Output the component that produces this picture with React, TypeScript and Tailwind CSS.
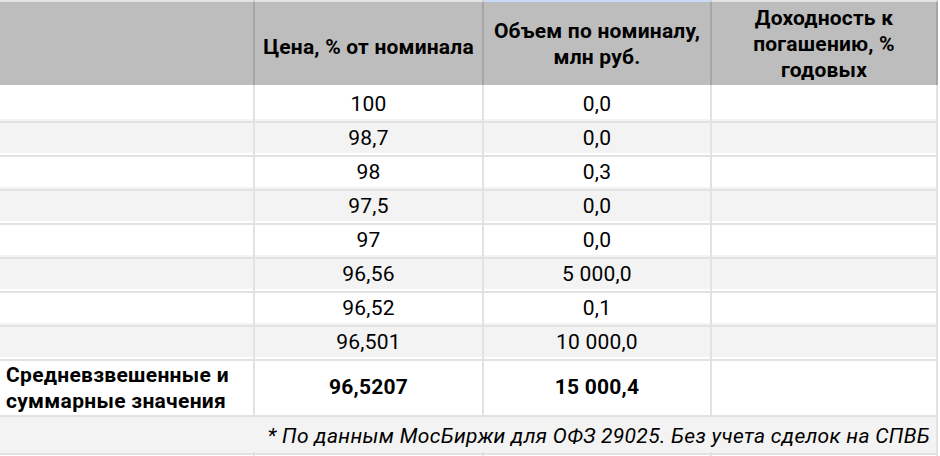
import React from "react";

const rows = [
  ["100", "0,0"],
  ["98,7", "0,0"],
  ["98", "0,3"],
  ["97,5", "0,0"],
  ["97", "0,0"],
  ["96,56", "5 000,0"],
  ["96,52", "0,1"],
  ["96,501", "10 000,0"],
];

const cols = "grid grid-cols-[255px_229px_228px_226px_2px]";

export default function App() {
  return (
    <div
      className="w-[940px] h-[456px] overflow-hidden bg-white text-black text-[21px] tracking-[0.2px]"
      style={{ fontFamily: "Roboto, 'Liberation Sans', sans-serif" }}
    >
      {/* top strip */}
      <div className={`${cols} h-[2px]`}>
        <div className="bg-[#e4e4e4] border-r-2 border-[#d0d0d0]" />
        <div className="bg-[#e4e4e4] border-r-2 border-[#d0d0d0]" />
        <div className="bg-[#c9daf8] border-r-2 border-[#d0d0d0]" />
        <div className="bg-[#e4e4e4] border-r-2 border-[#d0d0d0]" />
        <div />
      </div>
      {/* header */}
      <div className={`${cols} h-[83px] bg-[#bdbdbd] font-bold leading-[26px]`}>
        <div className="border-r-2 border-[#a6a6a6]" />
        <div className="border-r-2 border-[#a6a6a6] flex items-center justify-center text-center pt-[7px] whitespace-nowrap">
          Цена, % от номинала
        </div>
        <div className="border-r-2 border-[#a6a6a6] flex items-center justify-center text-center pt-[1px] whitespace-nowrap">
          <span>
            Объем по номиналу,
            <br />
            млн руб.
          </span>
        </div>
        <div className="border-r-2 border-[#a6a6a6] flex items-center justify-center text-center pt-[1px] whitespace-nowrap">
          <span>
            Доходность к
            <br />
            погашению, %
            <br />
            годовых
          </span>
        </div>
        <div className="bg-white" />
      </div>
      {rows.map(([a, b], i) => (
        <div
          key={i}
          className={`${cols} h-[34px] ${i % 2 === 1 ? "bg-[#f3f3f3]" : "bg-white"}`}
        >
          <div className="border-r-2 border-b-2 border-[#e2e2e2]" />
          <div className="border-r-2 border-b-2 border-[#e2e2e2] flex items-center justify-center pt-[4px]">
            {a}
          </div>
          <div className="border-r-2 border-b-2 border-[#e2e2e2] flex items-center justify-center pt-[4px]">
            {b}
          </div>
          <div className="border-r-2 border-b-2 border-[#e2e2e2]" />
          <div className="bg-white" />
        </div>
      ))}
      {/* totals */}
      <div className={`${cols} h-[60px] bg-white font-bold`}>
        <div className="border-r-2 border-b-2 border-[#e2e2e2] flex items-center pl-[6px] leading-[26px] pt-[3px] whitespace-nowrap tracking-[0.3px]">
          <span>
            Средневзвешенные и
            <br />
            суммарные значения
          </span>
        </div>
        <div className="border-r-2 border-b-2 border-[#e2e2e2] flex items-center justify-center pt-[3px]">
          96,5207
        </div>
        <div className="border-r-2 border-b-2 border-[#e2e2e2] flex items-center justify-center pt-[3px]">
          15 000,4
        </div>
        <div className="border-r-2 border-b-2 border-[#e2e2e2]" />
        <div className="bg-white" />
      </div>
      {/* footnote */}
      <div className="grid grid-cols-[938px_2px] h-[35px]">
        <div className="bg-[#f3f3f3] border-r-2 border-b-2 border-[#e2e2e2] flex items-center justify-end pr-[6px] pt-[4px] italic whitespace-nowrap tracking-[0.32px]">
          * По данным МосБиржи для ОФЗ 29025. Без учета сделок на СПВБ
        </div>
        <div className="bg-white" />
      </div>
      <div className={`${cols} h-[10px]`}>
        <div className="border-r-2 border-[#e2e2e2]" />
        <div className="border-r-2 border-[#e2e2e2]" />
        <div className="border-r-2 border-[#e2e2e2]" />
        <div className="border-r-2 border-[#e2e2e2]" />
        <div />
      </div>
    </div>
  );
}
